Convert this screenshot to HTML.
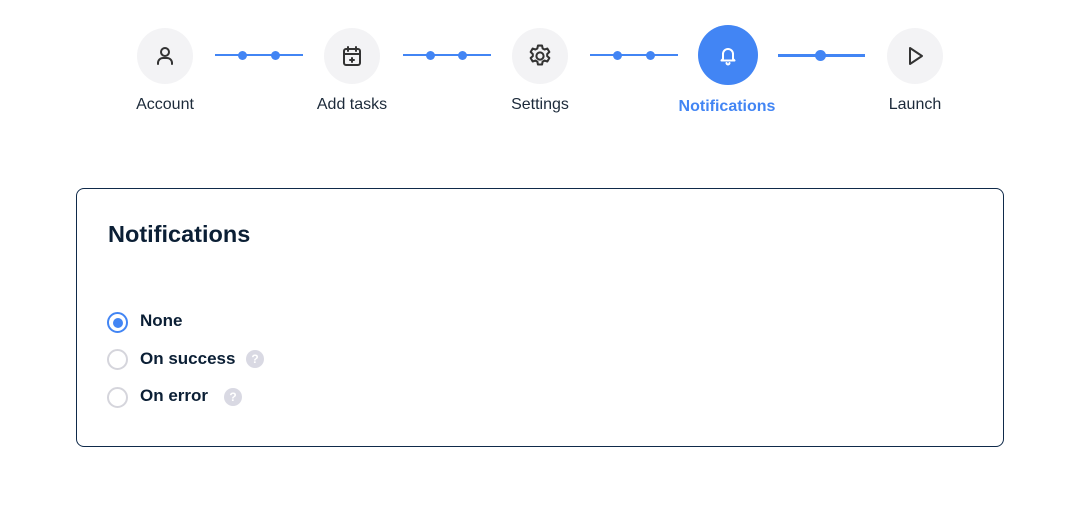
<!DOCTYPE html>
<html><head><style>
body{margin:0;width:1083px;height:528px;background:#fff;font-family:"Liberation Sans",sans-serif;position:relative;overflow:hidden;color:#0b1f35}
.c{position:absolute;width:56px;height:56px;border-radius:50%;background:#f3f3f5;top:28px;display:flex;align-items:center;justify-content:center}
.c svg{width:24px;height:24px}
.l{position:absolute;top:96px;font-size:16px;transform:translateX(-50%);white-space:nowrap;color:#1c2a3a}
.ln{position:absolute;height:2px;background:#4285f4;top:54px}
.d{position:absolute;width:9px;height:9px;border-radius:50%;background:#4285f4;top:51px}
.card{position:absolute;left:76px;top:188px;width:926px;height:257px;border:1px solid #0f2a4a;border-radius:8px}
.r{position:absolute;left:107px;width:17px;height:17px;border:2px solid #d5d5dc;border-radius:50%}
.t{position:absolute;left:140px;font-size:17px;font-weight:bold;color:#0b1f35}
.q{position:absolute;width:18px;height:18px;border-radius:50%;background:#d9d9e3;color:#fff;font-size:12px;font-weight:bold;text-align:center;line-height:18px}
</style></head><body>
<div class="c" style="left:137px"><svg viewBox="0 0 24 24" fill="none" stroke="#333" stroke-width="2" stroke-linecap="round"><circle cx="12" cy="8" r="4"/><path d="M5 20v-1a5 5 0 0 1 5-5h4a5 5 0 0 1 5 5v1"/></svg></div>
<div class="c" style="left:324px"><svg viewBox="0 0 24 24" fill="none" stroke="#333" stroke-width="2" stroke-linecap="round"><rect x="4" y="5" width="16" height="16" rx="2"/><path d="M8 3v4M16 3v4M4 10h16M12 14v4M10 16h4"/></svg></div>
<div class="c" style="left:512px"><svg viewBox="2 2 20 20" fill="none" stroke="#333" stroke-width="1.7" stroke-linejoin="round"><path d="M10.3 3.3h3.4l.5 2.4 1.6.9 2.3-.8 1.7 2.9-1.8 1.6v1.8l1.8 1.6-1.7 2.9-2.3-.8-1.6.9-.5 2.4h-3.4l-.5-2.4-1.6-.9-2.3.8-1.7-2.9 1.8-1.6v-1.8L4.2 8.7l1.7-2.9 2.3.8 1.6-.9z"/><circle cx="12" cy="12" r="3"/></svg></div>
<div class="c" style="left:698px;top:25px;width:60px;height:60px;background:#4285f4"><svg viewBox="0 0 24 24" fill="none" stroke="#fff" stroke-width="2" stroke-linecap="round" stroke-linejoin="round"><path d="M7 16V11a5 5 0 0 1 10 0v5l1.5 1.5h-13z"/><path d="M10.5 20a1.5 1.5 0 0 0 3 0"/></svg></div>
<div class="c" style="left:887px"><svg viewBox="0 0 24 24" fill="none" stroke="#333" stroke-width="2" stroke-linejoin="round"><path d="M7 4l12 8-12 8z"/></svg></div>
<div class="ln" style="left:215px;width:88px"></div><div class="d" style="left:238px"></div><div class="d" style="left:271px"></div>
<div class="ln" style="left:403px;width:88px"></div><div class="d" style="left:426px"></div><div class="d" style="left:458px"></div>
<div class="ln" style="left:590px;width:88px"></div><div class="d" style="left:613px"></div><div class="d" style="left:646px"></div>
<div class="ln" style="left:778px;width:87px;height:3px;top:54px"></div><div class="d" style="left:815px;width:11px;height:11px;top:50px"></div>
<div class="l" style="left:165px">Account</div>
<div class="l" style="left:352px">Add tasks</div>
<div class="l" style="left:540px">Settings</div>
<div class="l" style="left:727px;top:98px;color:#4285f4;font-weight:bold">Notifications</div>
<div class="l" style="left:915px">Launch</div>
<div class="card"></div>
<div style="position:absolute;left:108px;top:221px;font-size:23.5px;font-weight:bold;color:#0b1f35">Notifications</div>
<div class="r" style="top:312px;border-color:#4285f4"><div style="position:absolute;left:3.5px;top:3.5px;width:10px;height:10px;border-radius:50%;background:#4285f4"></div></div>
<div class="r" style="top:349px"></div>
<div class="r" style="top:387px"></div>
<div class="t" style="top:311px">None</div>
<div class="t" style="top:349px">On success</div>
<div class="t" style="top:386px">On error</div>
<div class="q" style="left:246px;top:350px">?</div>
<div class="q" style="left:224px;top:388px">?</div>
</body></html>
